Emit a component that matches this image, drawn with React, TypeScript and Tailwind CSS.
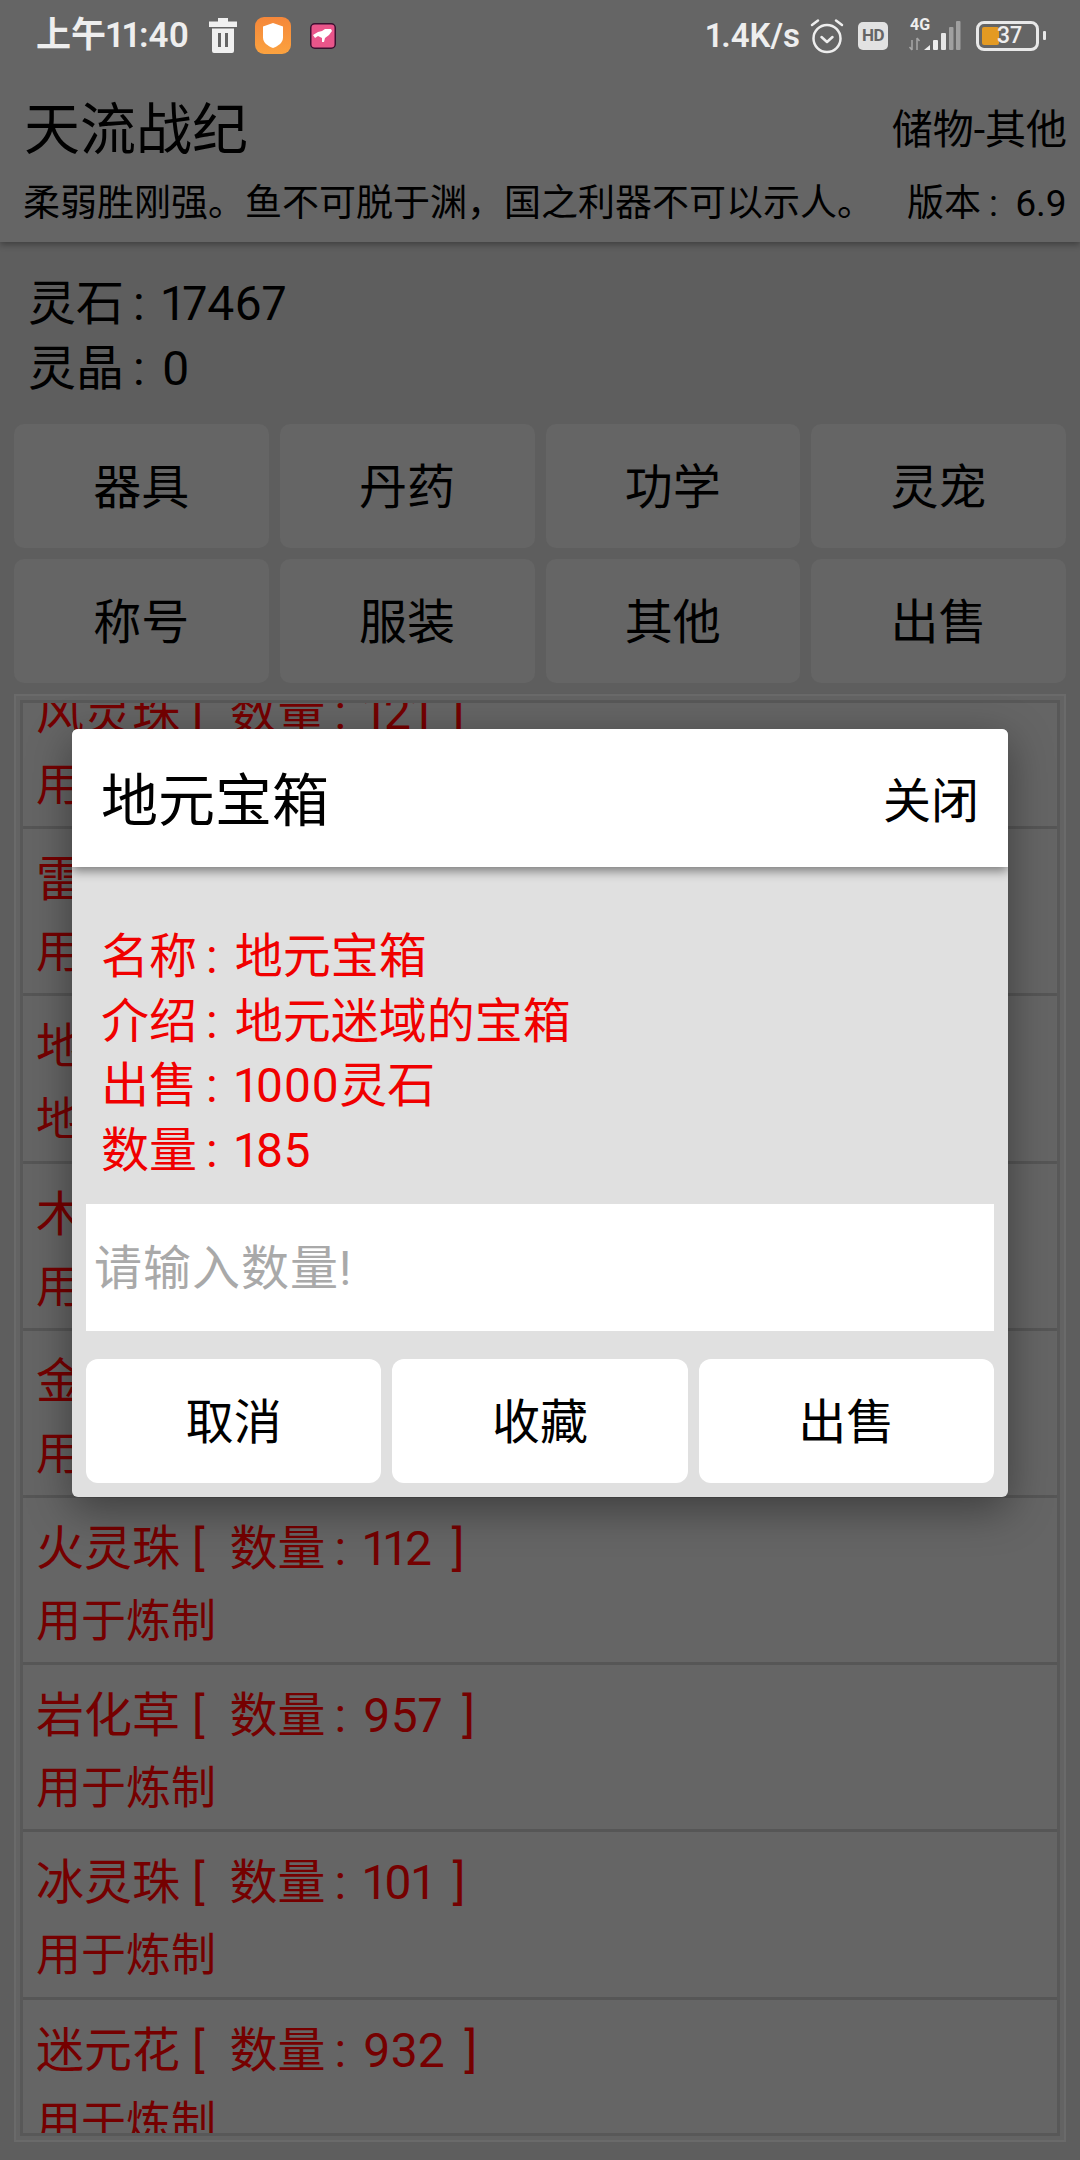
import React from "react";

const font = "font-['Roboto','Noto_Sans_CJK_SC',sans-serif]";

function Colon() {
  return <span className="ml-[9px] mr-[17px]">:</span>;
}

function TrashIcon() {
  return (
    <svg width="28" height="35" viewBox="0 0 28 35" fill="#f0f0f0">
      <path d="M9 0h10v3.500h9V9H0V3.500h9z" />
      <path fillRule="evenodd" d="M3 10.500h22V33a2 2 0 0 1-2 2H5a2 2 0 0 1-2-2zM9 15v14h3V15zM16 15v14h3V15z" />
    </svg>
  );
}

function ShieldBadge() {
  return (
    <svg width="36" height="37" viewBox="0 0 36 37">
      <defs>
        <linearGradient id="badge" x1="0" y1="0" x2="0" y2="1">
          <stop offset="0" stopColor="#f5873a" />
          <stop offset="1" stopColor="#fba23f" />
        </linearGradient>
      </defs>
      <rect width="36" height="37" rx="9" fill="url(#badge)" />
      <path d="M18 6l10 3.500v11c0 5-4.500 8.500-10 10.500-5.500-2-10-5.500-10-10.500v-11z" fill="#fff" />
    </svg>
  );
}

function BirdBadge() {
  return (
    <svg width="26" height="26" viewBox="0 0 26 26">
      <rect x="0.75" y="0.75" width="24.500" height="24.500" rx="4" fill="#e9558a" stroke="#3a1030" strokeWidth="1.500" />
      <path d="M3 12l5-3 4-1 3-2h6l1 2-3 4-4 3-1 4h-2v-4l-4-2-3 2z" fill="#fff" />
    </svg>
  );
}

function AlarmIcon() {
  return (
    <svg width="34" height="36" viewBox="0 0 34 36" fill="none" stroke="#eeeeee" strokeWidth="2.500" strokeLinecap="round" strokeLinejoin="round">
      <circle cx="17" cy="20.500" r="13.500" />
      <path d="M11.500 19l5.500 5 5.500-5" />
      <path d="M2 7l6-4.500M32 7l-6-4.500" />
    </svg>
  );
}

function HdIcon() {
  return (
    <div className="flex h-[28px] w-[30px] items-center justify-center rounded-[5px] bg-[#e2e2e2] text-[17px] font-bold tracking-[-0.5px] text-[#656565]">
      HD
    </div>
  );
}

function SignalIcon() {
  return (
    <div className="relative h-[32px] w-[54px]">
      <span className="absolute left-[3px] top-[-3px] text-[16px] font-bold leading-[16px] text-[#eeeeee]">4G</span>
      <svg className="absolute inset-0" width="54" height="32" viewBox="0 0 54 32">
        <path d="M5 30V20M2.500 27l2.500 3M10 18v12M10 18l2.500 3" stroke="#a6a6a6" strokeWidth="1.500" fill="none" />
        <path d="M17 30l6-5v5z" fill="#eeeeee" />
        <rect x="26" y="20" width="5" height="10" rx="1" fill="#eeeeee" />
        <rect x="34" y="13" width="5" height="17" rx="1" fill="#e6e6e6" />
        <rect x="42" y="7" width="4.500" height="23" rx="1" fill="#a0a0a0" />
        <rect x="49" y="1" width="4.500" height="29" rx="1" fill="#a0a0a0" />
      </svg>
    </div>
  );
}

function BatteryIcon() {
  return (
    <div className="flex items-center gap-[4px]">
      <div className="relative h-[30px] w-[63px] rounded-[8px] border-[3px] border-[#e8e8e8]">
        <div className="absolute bottom-[3px] left-[3px] top-[3px] w-[17px] rounded-[2px] bg-[#e39a23]" />
        <span className="absolute inset-0 flex items-center justify-center pl-[4px] text-[23px] font-medium leading-none text-[#eeeeee]">37</span>
      </div>
      <div className="h-[9px] w-[3px] rounded-[1px] bg-[#e8e8e8]" />
    </div>
  );
}

function StatusBar() {
  return (
    <div className="flex h-[72px] items-center justify-between pb-[1px] pl-[36px] pr-[34px] text-[#eeeeee]">
      <div className="flex items-center">
        <span className="w-[173px] whitespace-nowrap text-[35px] font-semibold leading-none">上午11:40</span>
        <TrashIcon />
        <span className="ml-[18px]"><ShieldBadge /></span>
        <span className="ml-[19px]"><BirdBadge /></span>
      </div>
      <div className="flex items-center">
        <span className="text-[33px] font-semibold leading-none">1.4K/s</span>
        <span className="ml-[10px]"><AlarmIcon /></span>
        <span className="ml-[14px]"><HdIcon /></span>
        <span className="ml-[19px]"><SignalIcon /></span>
        <span className="ml-[15px]"><BatteryIcon /></span>
      </div>
    </div>
  );
}

const tabs = ["器具", "丹药", "功学", "灵宠", "称号", "服装", "其他", "出售"];

const items = [
  ["风灵珠", "121", "用于炼制"],
  ["雷灵珠", "124", "用于炼制"],
  ["地元宝箱", "185", "地元迷域的宝箱"],
  ["木灵珠", "118", "用于炼制"],
  ["金灵珠", "109", "用于炼制"],
  ["火灵珠", "112", "用于炼制"],
  ["岩化草", "957", "用于炼制"],
  ["冰灵珠", "101", "用于炼制"],
  ["迷元花", "932", "用于炼制"],
];

function ItemRow({ name, count, note }: { name: string; count: string; note: string }) {
  return (
    <div className="h-[167.2px] shrink-0 border-b-[3px] border-[#565656] pl-[13px] pt-[18px] text-[#750000]">
      <div className="whitespace-pre">
        {name} [ <span className="ml-[13px]">数量</span>
        <Colon />
        {count} <span className="ml-[8px]">]</span>
      </div>
      <div className="mt-[8px] text-[45px]">{note}</div>
    </div>
  );
}

function SellDialog() {
  const info: [string, string][] = [
    ["名称", "地元宝箱"],
    ["介绍", "地元迷域的宝箱"],
    ["出售", "1000灵石"],
    ["数量", "185"],
  ];
  return (
    <div className="absolute left-[72px] top-[729px] flex w-[936px] flex-col overflow-hidden rounded-[6px] bg-[#e0e0e0] shadow-[0_12px_44px_rgba(0,0,0,0.4)]">
      <div className="flex h-[138px] items-center justify-between bg-white pl-[29px] pr-[29px] pt-[6px] text-black shadow-[0_4px_10px_rgba(0,0,0,0.45)]">
        <span className="text-[57px]">地元宝箱</span>
        <span>关闭</span>
      </div>
      <div className="pl-[29px] pr-[30px] pt-[58px] leading-[64.5px] text-[#f00000]">
        {info.map(([label, value]) => (
          <div key={label}>
            {label}
            <Colon />
            {value}
          </div>
        ))}
      </div>
      <input
        readOnly
        placeholder="请输入数量!"
        className="mx-[14px] mt-[21px] h-[127px] bg-white pl-[8px] pt-[2px] tracking-[1px] text-[#a9a9a9] outline-none placeholder:text-[#a9a9a9]"
      />
      <div className="mx-[14px] mb-[14px] mt-[28px] grid grid-cols-3 gap-[11px]">
        {["取消", "收藏", "出售"].map((label) => (
          <div key={label} className="flex h-[124px] items-center justify-center rounded-[12px] bg-white pt-[2px] text-black">
            {label}
          </div>
        ))}
      </div>
    </div>
  );
}

export default function App() {
  return (
    <div className={`${font} proportional-nums relative flex h-[2160px] w-[1080px] flex-col overflow-hidden bg-[#5e5e5e] text-[48px] leading-[65px] text-black`}>
      <header className="h-[242px] shrink-0 bg-[#656565] shadow-[0_3px_6px_rgba(0,0,0,0.3)]">
        <StatusBar />
        <div className="flex h-[92px] items-center justify-between pl-[24px] pr-[13px] pt-[24px]">
          <span className="text-[56px]">天流战纪</span>
          <span className="text-[41px]">储物-其他</span>
        </div>
        <div className="mt-[14px] flex items-center justify-between pl-[23px] pr-[13px] text-[37px] leading-[52px]">
          <span>柔弱胜刚强。鱼不可脱于渊，国之利器不可以示人。</span>
          <span>版本<span className="ml-[8px] mr-[17px]">:</span>6.9</span>
        </div>
      </header>

      <section className="pl-[28px] pt-[29px]">
        <div>灵石<Colon />17467</div>
        <div>灵晶<Colon />0</div>
      </section>

      <nav className="mt-[23px] grid grid-cols-4 gap-[11px] px-[14px]">
        {tabs.map((tab) => (
          <div key={tab} className="flex h-[124px] items-center justify-center rounded-[10px] bg-[#656565] pt-[2px]">
            {tab}
          </div>
        ))}
      </nav>

      <div className="mx-[14px] mt-[11px] h-[1448px] border-[2px] border-[#6a6a6a] bg-[#636363] p-[4px]">
        <div className="flex h-full flex-col overflow-hidden border-[3px] border-[#585858] bg-[#656565]">
          <div className="-mt-[41px] flex flex-col">
            {items.map(([name, count, note]) => (
              <ItemRow key={name} name={name} count={count} note={note} />
            ))}
          </div>
        </div>
      </div>

      <SellDialog />
    </div>
  );
}
